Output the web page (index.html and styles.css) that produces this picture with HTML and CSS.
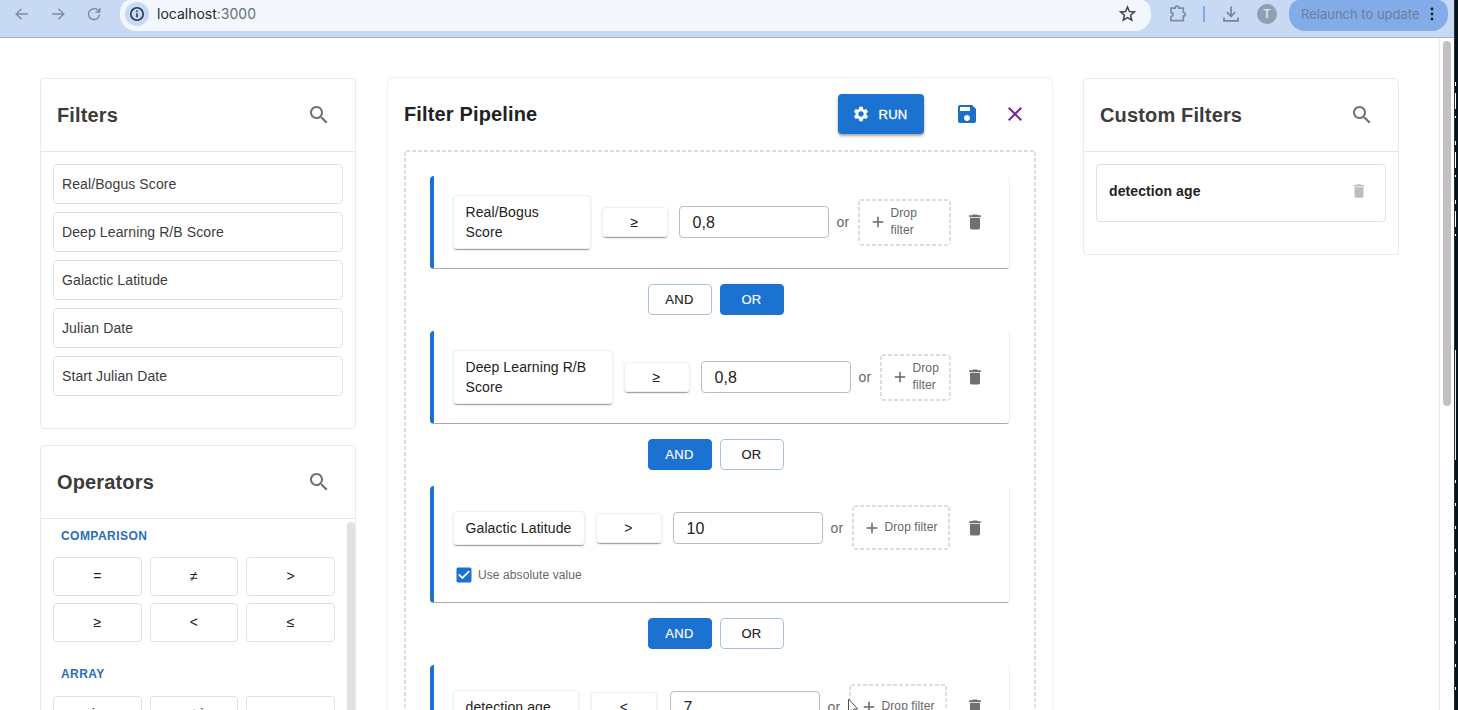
FILE: index.html
```html
<!DOCTYPE html>
<html lang="en">
<head>
<meta charset="utf-8">
<title>Filter Pipeline</title>
<link rel="stylesheet" href="styles.css">
</head>
<body>
<svg class="defs" aria-hidden="true">
  <symbol id="search" viewBox="0 0 24 24"><path d="M15.5 14h-.79l-.28-.27C15.41 12.59 16 11.11 16 9.5 16 5.91 13.09 3 9.5 3S3 5.91 3 9.5 5.91 16 9.5 16c1.61 0 3.09-.59 4.23-1.57l.27.28v.79l5 4.99L20.49 19zm-6 0C7.01 14 5 11.99 5 9.5S7.01 5 9.5 5 14 7.01 14 9.5 11.99 14 9.5 14"/></symbol>
  <symbol id="trash" viewBox="0 0 24 24"><path d="M6 19c0 1.1.9 2 2 2h8c1.100 0 2-.9 2-2V7H6zM19 4h-3.500l-1-1h-5l-1 1H5v2h14z"/></symbol>
  <symbol id="plus" viewBox="0 0 24 24"><path d="M19 13h-6v6h-2v-6H5v-2h6V5h2v6h6z"/></symbol>
</svg>
<div class="desktop">
  <div class="browser">
    <header class="toolbar">
      <svg class="nav back" viewBox="0 0 16 16"><path d="M14 8H2.500M7.500 2.700 2.200 8l5.300 5.300"/></svg>
      <svg class="nav forward" viewBox="0 0 16 16"><path d="M2 8h11.500M8.500 2.700 13.800 8l-5.300 5.300"/></svg>
      <svg class="nav reload" viewBox="0 0 16 16"><path d="M13.500 8.500A5.500 5.500 0 1 1 11.900 4.200L13.500 5.800M13.700 1.800v4.100H9.600"/></svg>
      <div class="address">
        <span class="site-info"><svg viewBox="0 0 16 16"><circle cx="8" cy="8" r="6.200"/><path d="M8 7.300v4M8 4.500v1.500"/></svg></span>
        <span class="url">localhost<span class="port">:3000</span></span>
        <svg class="star" viewBox="0 0 16 16"><path d="m8 1.800 1.800 4.300 4.700.4-3.600 3.100 1.100 4.600L8 11.800l-4 2.400 1.100-4.600L1.500 6.500l4.700-.4z"/></svg>
      </div>
      <svg class="puzzle" viewBox="0 0 18 18"><path d="M2 3.200h4.200C6.200.4 9.800.4 9.800 3.200h4.500v4.300c2.700 0 2.700 3.500 0 3.500v4.700H2v-4.200c2.700-.3 2.700-3.600 0-3.900z"/></svg>
      <span class="divider"></span>
      <svg class="download" viewBox="0 0 18 18"><path d="M9 1.500v9.500M4.800 7.200 9 11.300l4.200-4.100M2 12.500v3.300h14v-3.300"/></svg>
      <span class="avatar">T</span>
      <span class="relaunch">Relaunch to update<svg viewBox="0 0 4 14"><circle cx="2" cy="2" r="1.400"/><circle cx="2" cy="7" r="1.400"/><circle cx="2" cy="12" r="1.400"/></svg></span>
    </header>
    <div class="viewport">
      <main class="page">
        <aside class="side">
          <section class="card filters">
            <div class="card-head"><h2>Filters</h2><svg class="search"><use href="#search"/></svg></div>
            <ul class="filter-list">
              <li>Real/Bogus Score</li>
              <li>Deep Learning R/B Score</li>
              <li>Galactic Latitude</li>
              <li>Julian Date</li>
              <li>Start Julian Date</li>
            </ul>
          </section>
          <section class="card operators">
            <div class="card-head"><h2>Operators</h2><svg class="search"><use href="#search"/></svg></div>
            <div class="op-scroll">
              <div class="op-groups">
                <h3>COMPARISON</h3>
                <div class="op-grid"><span>=</span><span>≠</span><span>&gt;</span><span>≥</span><span>&lt;</span><span>≤</span></div>
                <h3>ARRAY</h3>
                <div class="op-grid array"><span>in</span><span>not in</span><span>∩∩</span></div>
              </div>
              <div class="op-thumb"></div>
            </div>
          </section>
        </aside>

        <section class="pipeline">
          <div class="pipe-head">
            <h2>Filter Pipeline</h2>
            <button class="run"><svg viewBox="0 0 24 24"><path d="M19.140 12.940c.04-.3.06-.61.06-.94 0-.32-.02-.64-.07-.94l2.030-1.580c.18-.14.23-.41.12-.61l-1.920-3.320c-.12-.22-.37-.29-.59-.22l-2.390.96c-.5-.38-1.030-.7-1.620-.94l-.36-2.540c-.04-.24-.24-.41-.48-.41h-3.840c-.24 0-.43.17-.47.41l-.36 2.540c-.59.24-1.130.57-1.620.94l-2.390-.96c-.22-.08-.47 0-.59.22L2.740 8.870c-.12.21-.08.47.12.61l2.030 1.580c-.05.3-.09.63-.09.94s.02.64.07.94l-2.030 1.580c-.18.14-.23.41-.12.61l1.920 3.320c.12.22.37.29.59.22l2.390-.96c.5.38 1.030.7 1.620.94l.36 2.540c.05.24.24.41.48.41h3.840c.24 0 .44-.17.47-.41l.36-2.540c.59-.24 1.130-.56 1.620-.94l2.390.96c.22.08.47 0 .59-.22l1.920-3.320c.12-.22.07-.47-.12-.61zM12 15.600c-1.980 0-3.600-1.620-3.600-3.600s1.620-3.600 3.600-3.600 3.600 1.620 3.600 3.600-1.620 3.600-3.600 3.600"/></svg>RUN</button>
            <svg class="save" viewBox="0 0 24 24"><path d="M17 3H5c-1.110 0-2 .9-2 2v14c0 1.100.89 2 2 2h14c1.100 0 2-.9 2-2V7zm-5 16c-1.660 0-3-1.340-3-3s1.340-3 3-3 3 1.340 3 3-1.340 3-3 3m3-10H5V5h10z"/></svg>
            <svg class="close" viewBox="0 0 24 24"><path d="M19 6.410 17.590 5 12 10.590 6.410 5 5 6.410 10.590 12 5 17.590 6.410 19 12 13.410 17.590 19 19 17.590 13.410 12z"/></svg>
          </div>
          <div class="dropzone dashed">
            <div class="block">
              <div class="cond">
                <span class="chip chip-bogus">Real/Bogus Score</span><span class="op">≥</span><span class="value">0,8</span><span class="or">or</span>
                <span class="drop dashed wide"><svg><use href="#plus"/></svg><span>Drop filter</span></span>
                <svg class="trash"><use href="#trash"/></svg>
              </div>
            </div>
            <div class="logic"><span>AND</span><span class="on">OR</span></div>
            <div class="block">
              <div class="cond">
                <span class="chip chip-deep">Deep Learning R/B Score</span><span class="op">≥</span><span class="value">0,8</span><span class="or">or</span>
                <span class="drop dashed narrow"><svg><use href="#plus"/></svg><span>Drop filter</span></span>
                <svg class="trash"><use href="#trash"/></svg>
              </div>
            </div>
            <div class="logic"><span class="on">AND</span><span>OR</span></div>
            <div class="block tall">
              <div class="cond">
                <span class="chip chip-lat">Galactic Latitude</span><span class="op">&gt;</span><span class="value">10</span><span class="or">or</span>
                <span class="drop dashed single"><svg><use href="#plus"/></svg><span>Drop filter</span></span>
                <svg class="trash"><use href="#trash"/></svg>
              </div>
              <div class="absolute"><svg viewBox="0 0 24 24"><path d="M19 3H5c-1.110 0-2 .9-2 2v14c0 1.100.89 2 2 2h14c1.110 0 2-.9 2-2V5c0-1.100-.89-2-2-2m-9 14-5-5 1.410-1.410L10 14.170l7.590-7.590L19 8z"/></svg>Use absolute value</div>
            </div>
            <div class="logic"><span class="on">AND</span><span>OR</span></div>
            <div class="block tall last">
              <div class="cond">
                <span class="chip chip-age">detection age</span><span class="op">&lt;</span><span class="value">7</span><span class="or">or</span>
                <span class="drop dashed single">
                  <svg><use href="#plus"/></svg><span>Drop filter</span>
                  <svg class="pointer" viewBox="0 0 12 18"><path d="M1.500 1v13.500l3-2.700 2 4.700 2.200-1-2-4.500h4z"/></svg>
                </span>
                <svg class="trash"><use href="#trash"/></svg>
              </div>
            </div>
          </div>
        </section>

        <aside class="side">
          <section class="card custom">
            <div class="card-head"><h2>Custom Filters</h2><svg class="search"><use href="#search"/></svg></div>
            <div class="custom-item"><strong>detection age</strong><svg><use href="#trash"/></svg></div>
          </section>
        </aside>
      </main>
      <div class="scrollbar"><div class="thumb"></div></div>
    </div>
  </div>
  <div class="behind"></div>
</div>
</body>
</html>
```
FILE: styles.css
```css
* { box-sizing: border-box; }
body { margin: 0; background: #fff; font-family: "Liberation Sans", Arial, sans-serif; letter-spacing: 0.1px; }
svg { display: block; flex: none; }
h2, h3, ul { margin: 0; padding: 0; }
.defs { display: none; }

.desktop { display: flex; width: 1458px; height: 710px; overflow: hidden; }
.browser { display: flex; flex-direction: column; width: 1454px; height: 710px; }
.behind {
  width: 4px;
  border-left: 1px solid #26343a;
  background:
    repeating-linear-gradient(#fff 0 4px, transparent 4px 11px, #fff 11px 27px, transparent 27px 34px, #fff 34px 36px, transparent 36px 59px) 0 82px / 1px 160px no-repeat,
    linear-gradient(#e8eeee, #e8eeee) 0 350px / 1px 110px no-repeat,
    repeating-linear-gradient(#fff 0 3px, transparent 3px 23px) 0 480px / 1px 230px no-repeat,
    #04121a;
}

/* Browser toolbar */
.toolbar { display: flex; align-items: flex-start; height: 38px; background: #c8d9f4; border-bottom: 1px solid #9fb5d2; font-family: Inter, sans-serif; letter-spacing: 0; flex: none; }
.nav { width: 16px; height: 16px; margin-top: 6px; fill: none; stroke: #7f8da3; stroke-width: 1.500; }
.back { margin-left: 14px; }
.forward { margin-left: 20px; }
.reload { margin-left: 20px; }
.address { display: flex; width: 1031px; height: 31px; margin-left: 18px; background: linear-gradient(#f3f7fd, #f3f7fd); border-radius: 10px 10px 16px 16px / 12px 12px 16px 16px; }
.site-info { display: grid; place-items: center; width: 24px; height: 24px; margin: 2px 0 0 5px; border-radius: 50%; background: #c8d9f4; }
.site-info svg { width: 16px; height: 16px; fill: none; stroke: #26364d; stroke-width: 1.600; }
.url { margin-left: 8px; font-size: 14px; line-height: 28px; color: #23272e; }
.port { color: #6a6e76; }
.star { width: 17px; height: 17px; margin: 5px 15px 0 auto; fill: none; stroke: #414750; stroke-width: 1.400; }
.puzzle { width: 18px; height: 18px; margin: 5px 0 0 18px; fill: none; stroke: #7c8da8; stroke-width: 1.700; }
.divider { width: 2px; height: 16px; margin: 6px 0 0 16px; background: #80ace8; }
.download { width: 18px; height: 18px; margin: 5px 0 0 17px; fill: none; stroke: #74849a; stroke-width: 1.700; }
.avatar { width: 20px; height: 20px; margin: 4px 0 0 17px; border-radius: 50%; background: #90a0b2; color: #dce4ee; font-size: 12px; font-weight: 600; line-height: 20px; text-align: center; }
.relaunch { display: flex; width: 159px; height: 31px; margin-left: 12px; padding-left: 12px; border-radius: 10px 10px 16px 16px / 12px 12px 16px 16px; background: #82ace8; color: #67809f; font-size: 13px; line-height: 29px; white-space: nowrap; }
.relaunch svg { width: 4px; height: 14px; margin: 7px 14px 0 auto; fill: #17202c; }

/* Page */
.viewport { display: flex; height: 672px; }
.page { display: flex; align-items: flex-start; width: 1439px; height: 672px; padding: 40px 40px 0; overflow: hidden; }
.scrollbar { width: 15px; padding: 3px 0 0 3px; border-left: 1px solid #e8e8e8; }
.thumb { width: 8px; height: 365px; border-radius: 4px; background: #c1c1c1; }
.side { display: flex; flex-direction: column; gap: 16px; width: 316px; flex: none; }
.card { border: 1px solid #ebebeb; border-radius: 4px; }
.card-head { display: flex; align-items: center; justify-content: space-between; height: 73px; padding: 0 24px 0 16px; border-bottom: 1px solid #e6e6e6; }
h2 { font-size: 20px; line-height: 32px; font-weight: 700; color: #3c3c3c; letter-spacing: 0.15px; }
.search { width: 24px; height: 24px; fill: #707070; }

.filters { height: 351px; }
.filter-list { display: grid; gap: 8px; padding: 12px; list-style: none; }
.filter-list li { height: 40px; padding-left: 8px; border: 1px solid #e0e0e0; border-radius: 4px; font-size: 14px; line-height: 38px; color: #3c3c3c; }

.operators { height: 400px; overflow: hidden; }
.op-scroll { display: flex; justify-content: space-between; }
.op-groups { width: 294px; padding-left: 12px; }
h3 { height: 38px; padding: 8px 0 0 8px; font-size: 12px; line-height: 18px; letter-spacing: 0.45px; color: #2a6ebb; }
.op-grid + h3 { height: 54px; padding-top: 23px; }
.op-grid { display: grid; grid-template-columns: repeat(3, 1fr); grid-auto-rows: 38.500px; gap: 7.500px 8px; }
.op-grid span { border: 1px solid #e0e0e0; border-radius: 4px; font-size: 14px; line-height: 37px; text-align: center; color: #222; }
.op-grid.array span { line-height: 34px; }
.op-thumb { width: 8px; height: 300px; margin-top: 3px; border-radius: 4px; background: #e1e1e1; }

/* Dashed outline with a 6px period */
.dashed {
  border-radius: 4px;
  background:
    repeating-linear-gradient(90deg, #dedede 0 4px, transparent 4px 6px) 2px 0 / calc(100% - 4px) 2px no-repeat,
    repeating-linear-gradient(90deg, #dedede 0 4px, transparent 4px 6px) 2px 100% / calc(100% - 4px) 2px no-repeat,
    repeating-linear-gradient(#dedede 0 4px, transparent 4px 6px) 0 2px / 2px calc(100% - 4px) no-repeat,
    repeating-linear-gradient(#dedede 0 4px, transparent 4px 6px) 100% 2px / 2px calc(100% - 4px) no-repeat;
}

/* Pipeline */
.pipeline { width: 664px; height: 900px; margin: 0 31px 0 32px; padding: 0 16px; border-radius: 4px; box-shadow: 0 0 2px rgba(0, 0, 0, 0.2); flex: none; }
.pipe-head { display: flex; align-items: center; height: 72px; }
.pipe-head h2 { flex: 1; color: #222; }
.run { display: flex; align-items: center; justify-content: center; gap: 8px; width: 86px; height: 40px; padding: 0 2px 0 0; border: 0; border-radius: 4px; background: #1b72d0; box-shadow: 0 2px 3px rgba(0, 0, 0, 0.35); color: #fff; font: 13px "Liberation Sans", sans-serif; letter-spacing: 0.3px; -webkit-text-stroke: 0.3px; }
.run svg { width: 18px; height: 18px; fill: #fff; }
.save { width: 24px; height: 24px; margin-left: 31px; fill: #1b6fc8; }
.close { width: 24px; height: 24px; margin: 0 9px 0 24px; fill: #7b2590; }
.dropzone { height: 820px; padding: 26px; }
.block { height: 93px; padding: 19px 0 0 19px; border-left: 4px solid #1b72d0; border-bottom: 1px solid #aaa; border-right: 1px solid #eee; border-radius: 4px; }
.tall { height: 117px; }
.cond { display: flex; align-items: center; height: 54px; }
.tall .cond { height: 45px; }
.chip { padding: 6px 11.500px; border: 1px solid #f0f0f0; border-radius: 4px; box-shadow: 0 2px 1px -1px rgba(0, 0, 0, 0.3), 0 1px 2px rgba(0, 0, 0, 0.15); font-size: 14px; line-height: 20px; color: #222; flex: none; }
.chip-bogus { width: 138px; }
.chip-deep { width: 160px; }
.chip-lat { width: 132px; white-space: nowrap; }
.chip-age { width: 126px; white-space: nowrap; }
.op { width: 66px; height: 30px; margin-left: 10.500px; border: 1px solid #f0f0f0; border-radius: 4px; box-shadow: 0 2px 1px -1px rgba(0, 0, 0, 0.3), 0 1px 2px rgba(0, 0, 0, 0.15); font-size: 14px; line-height: 29px; text-align: center; color: #222; flex: none; }
.value { width: 150.500px; height: 32px; margin-left: 11px; padding-left: 13px; border: 1px solid #bdbdbd; border-radius: 4px; font-size: 16px; line-height: 31px; color: #222; flex: none; }
.last .op { margin-left: 12px; }
.last .value { margin-left: 12.500px; }
.or { width: 21px; margin-left: 7.500px; font-size: 14px; color: #666; flex: none; }
.drop { position: relative; display: flex; align-items: center; gap: 4px; padding-left: 11px; font-size: 12px; line-height: 17px; color: #666; flex: none; }
.drop svg { width: 18px; height: 18px; fill: #666; }
.wide { width: 93px; height: 47px; }
.wide > span, .narrow > span { width: 32px; }
.narrow { width: 71px; height: 47px; }
.single { width: 98px; height: 45px; white-space: nowrap; }
.cond .trash { width: 20px; height: 20px; margin: 0 24px 0 auto; fill: #707070; }
.drop .pointer { position: absolute; left: -2px; top: 14px; width: 12px; height: 18px; fill: #fff; stroke: #555; }
.logic { display: flex; justify-content: center; gap: 8px; padding: 15px 9px 16px 0; }
.logic span { width: 64px; height: 31px; border: 1px solid #a9c2df; border-radius: 4px; font-size: 13px; line-height: 29px; letter-spacing: 0.3px; -webkit-text-stroke: 0.15px; text-align: center; color: #222; }
.logic .on { border-color: #1b72d0; background: #1b72d0; color: #fff; }
.absolute { display: flex; align-items: center; gap: 4px; height: 20px; margin: 15px 0 0 1px; font-size: 12px; letter-spacing: 0.1px; color: #666; }
.absolute svg { width: 20px; height: 20px; fill: #1b72d0; }

.custom { height: 177px; }
.custom-item { display: flex; align-items: center; justify-content: space-between; height: 58px; margin: 12px; padding: 0 17px 4px 12px; border: 1px solid #e0e0e0; border-radius: 4px; font-size: 14px; color: #222; }
.custom-item svg { width: 18px; height: 18px; fill: #bdbdbd; }
```
